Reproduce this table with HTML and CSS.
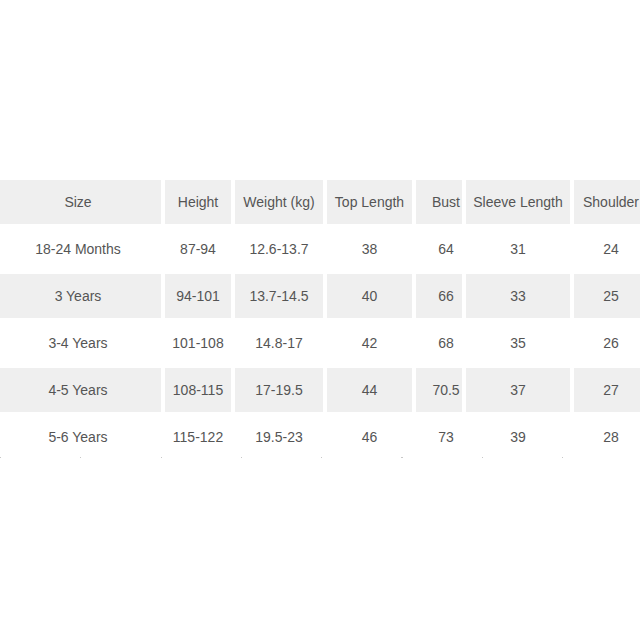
FILE: index.html
```html
<!DOCTYPE html>
<html lang="en">
<head>
<meta charset="utf-8">
<title>Size Chart</title>
<link rel="stylesheet" href="styles.css">
</head>
<body>
<div class="page">
  <div class="chart">
    <div class="cell shade">Size</div>
    <div class="cell shade">Height</div>
    <div class="cell shade">Weight (kg)</div>
    <div class="cell shade">Top Length</div>
    <div class="cell shade bust">Bust</div>
    <div class="cell shade">Sleeve Length</div>
    <div class="cell shade">Shoulder</div>

    <div class="cell">18-24 Months</div>
    <div class="cell">87-94</div>
    <div class="cell">12.6-13.7</div>
    <div class="cell">38</div>
    <div class="cell bust">64</div>
    <div class="cell">31</div>
    <div class="cell">24</div>

    <div class="cell shade">3 Years</div>
    <div class="cell shade">94-101</div>
    <div class="cell shade">13.7-14.5</div>
    <div class="cell shade">40</div>
    <div class="cell shade bust">66</div>
    <div class="cell shade">33</div>
    <div class="cell shade">25</div>

    <div class="cell">3-4 Years</div>
    <div class="cell">101-108</div>
    <div class="cell">14.8-17</div>
    <div class="cell">42</div>
    <div class="cell bust">68</div>
    <div class="cell">35</div>
    <div class="cell">26</div>

    <div class="cell shade">4-5 Years</div>
    <div class="cell shade">108-115</div>
    <div class="cell shade">17-19.5</div>
    <div class="cell shade">44</div>
    <div class="cell shade bust">70.5</div>
    <div class="cell shade">37</div>
    <div class="cell shade">27</div>

    <div class="cell">5-6 Years</div>
    <div class="cell">115-122</div>
    <div class="cell">19.5-23</div>
    <div class="cell">46</div>
    <div class="cell bust">73</div>
    <div class="cell">39</div>
    <div class="cell">28</div>
  </div>
  <div class="dots"></div>
</div>
</body>
</html>
```
FILE: styles.css
```css
html, body {
  margin: 0;
  padding: 0;
  background: #ffffff;
  overflow: hidden;
  width: 640px;
  height: 640px;
}

.page {
  padding-top: 180px;
  font-family: "Liberation Sans", Arial, sans-serif;
  font-size: 14px;
  color: #555555;
}

.chart {
  display: grid;
  grid-template-columns: 166px 66px 88px 85px 46px 104px 74px;
  grid-auto-rows: 44px;
  column-gap: 4px;
  row-gap: 3px;
  margin-left: -5px;
  width: max-content;
}

.cell {
  display: flex;
  align-items: center;
  justify-content: center;
  white-space: nowrap;
}

.shade {
  background: #efefef;
}

.bust {
  padding-left: 14px;
}

.dots {
  height: 1px;
  margin-top: -2px;
  background: repeating-linear-gradient(to right, #c8c8c8 0 1px, transparent 1px 80.3px);
}
```
